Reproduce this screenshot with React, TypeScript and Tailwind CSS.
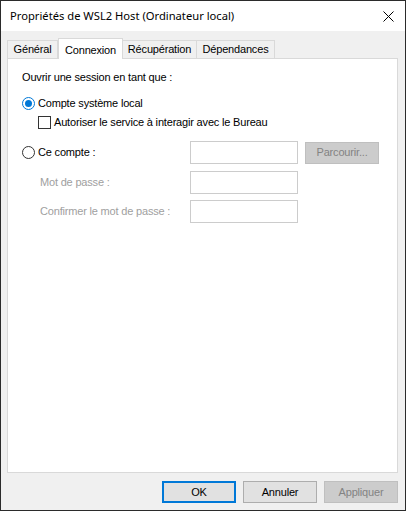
import React from 'react';

const tabs = [
    { name: 'Général', w: 'w-[51px]' },
    { name: 'Connexion', w: 'w-[65px]', active: true },
    { name: 'Récupération', w: 'w-[75px]' },
    { name: 'Dépendances', w: 'w-[79px]' },
];

function Radio({ checked }: { checked?: boolean }) {
    return (
        <span
            className={
                checked
                    ? 'flex h-[13px] w-[13px] shrink-0 items-center justify-center rounded-full border border-[#0078d7] bg-white'
                    : 'flex h-[13px] w-[13px] shrink-0 items-center justify-center rounded-full border border-[#333333] bg-white'
            }
        >
            {checked && <span className="h-[7px] w-[7px] rounded-full bg-[#0078d7]" />}
        </span>
    );
}

function Field() {
    return <div className="h-[23px] w-[108px] shrink-0 border border-[#cccccc] bg-white" />;
}

export default function App() {
    return (
        <div
            className="flex h-[511px] w-[406px] flex-col border border-[#2b2b2b] bg-[#f0f0f0] text-[11px] tracking-[-0.18px] text-black"
            style={{ fontFamily: '"Liberation Sans", Arial, sans-serif' }}
        >
            {/* Title bar */}
            <div className="flex h-[30px] shrink-0 items-center justify-between bg-white pl-[9px] pr-[10px]">
                <span className="text-[11.2px] tracking-normal text-[#000]" style={{ fontFamily: '"Noto Sans", "Liberation Sans", sans-serif' }}>
                    Propriétés de WSL2 Host (Ordinateur local)
                </span>
                <svg width="11" height="11" viewBox="0 0 11 11" className="mr-[1px]">
                    <path d="M0.5 0.5 L10.5 10.5 M10.5 0.5 L0.5 10.5" stroke="#000" strokeWidth="1" />
                </svg>
            </div>

            {/* Body */}
            <div className="flex flex-1 flex-col px-[6px] pt-[7px]">
                {/* Tabs */}
                <div className="flex h-[20px] items-end">
                    {tabs.map((tab) =>
                        tab.active ? (
                            <div
                                key={tab.name}
                                className={`relative z-10 -mb-px flex h-[21px] ${tab.w} items-start justify-center border border-b-0 border-[#d9d9d9] bg-white pt-[3px]`}
                            >
                                {tab.name}
                            </div>
                        ) : (
                            <div
                                key={tab.name}
                                className={`-ml-px flex h-[18px] ${tab.w} items-center justify-center border border-b-0 border-[#d9d9d9] bg-[#f0f0f0] first:ml-0`}
                            >
                                {tab.name}
                            </div>
                        )
                    )}
                </div>

                {/* Panel */}
                <div className="h-[415px] w-[391px] border border-[#d9d9d9] bg-white pl-[14px] pt-[12px]">
                    <div className="leading-[13px]">Ouvrir une session en tant que :</div>

                    <div className="mt-[13px] flex h-[13px] items-center gap-[3px]">
                        <Radio checked />
                        <span>Compte système local</span>
                    </div>

                    <div className="mt-[6px] flex h-[13px] items-center gap-[3px] pl-[16px]">
                        <span className="h-[13px] w-[13px] shrink-0 border border-[#333333] bg-white" />
                        <span>Autoriser le service à interagir avec le Bureau</span>
                    </div>

                    <div className="mt-[12px] flex h-[23px] items-center">
                        <div className="flex w-[168px] items-center gap-[3px]">
                            <Radio />
                            <span>Ce compte :</span>
                        </div>
                        <Field />
                        <button className="ml-[7px] h-[22px] w-[74px] border border-[#bfbfbf] bg-[#cccccc] text-[#838383]">
                            Parcourir...
                        </button>
                    </div>

                    <div className="mt-[7px] flex h-[23px] items-center">
                        <div className="w-[168px] pl-[18px] text-[#a0a0a0]">Mot de passe :</div>
                        <Field />
                    </div>

                    <div className="mt-[6px] flex h-[23px] items-center">
                        <div className="w-[168px] pl-[18px] text-[#a0a0a0]">Confirmer le mot de passe :</div>
                        <Field />
                    </div>
                </div>

                {/* Buttons */}
                <div className="mt-[8px] flex justify-end gap-[7px] pr-[1px]">
                    <button className="h-[22px] w-[74px] border-2 border-[#0078d7] bg-[#e1e1e1] text-black">OK</button>
                    <button className="h-[22px] w-[74px] border border-[#adadad] bg-[#e1e1e1] text-black">Annuler</button>
                    <button className="h-[22px] w-[74px] border border-[#bfbfbf] bg-[#cccccc] text-[#838383]">Appliquer</button>
                </div>
            </div>
        </div>
    );
}
